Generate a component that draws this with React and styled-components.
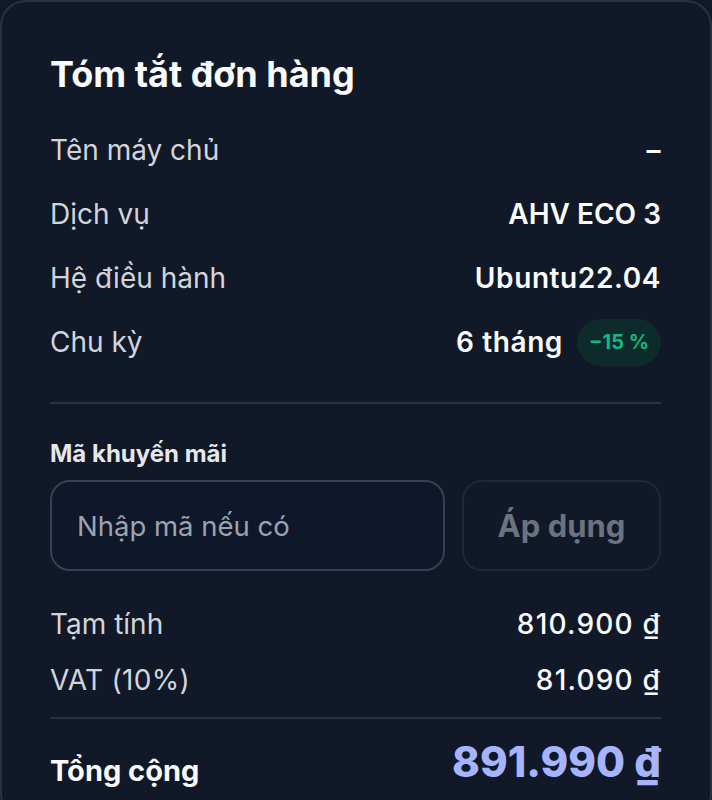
import React from "react";
import styled, { createGlobalStyle } from "styled-components";

const Global = createGlobalStyle`
  html, body { margin: 0; padding: 0; background: #111827; }
  body { font-family: "Inter", "Noto Sans", sans-serif; }
  * { box-sizing: border-box; }
`;

const Card = styled.section`
  width: 712px;
  min-height: 820px;
  background: #111827;
  border: 2px solid #2a3242;
  border-radius: 26px;
  padding: 48px 49px 0 48px;
  color: #f3f4f6;
  font-family: "Inter", sans-serif;
`;

const Title = styled.h2`
  margin: 0 0 20px 0;
  font-weight: 700;
  font-size: 36px;
  line-height: 48px;
  color: #f9fafb;
`;

const Rows = styled.div`
  display: flex;
  flex-direction: column;
`;

const Row = styled.div`
  display: flex;
  align-items: center;
  justify-content: space-between;
  height: ${(p) => p.$h || 64}px;
`;

const Label = styled.span`
  font-size: 28px;
  font-weight: 400;
  color: #d1d5db;
  letter-spacing: ${(p) => p.$ls || 0}px;
`;

const Value = styled.span`
  font-size: 28px;
  font-weight: 600;
  color: #f9fafb;
  letter-spacing: ${(p) => (p.$ls != null ? p.$ls : 0.6)}px;
  display: flex;
  align-items: center;
  gap: 14px;
`;

const Badge = styled.span`
  display: inline-flex;
  align-items: center;
  justify-content: center;
  height: 47px;
  width: 84px;
  border-radius: 999px;
  background: #0d2b2b;
  color: #10b981;
  font-size: 20px;
  font-weight: 700;
  letter-spacing: 0;
`;

const Divider = styled.hr`
  border: none;
  height: 2px;
  background: #2b3341;
  margin: ${(p) => p.$m || "28px 0 0 0"};
`;

const PromoLabel = styled.div`
  margin-top: 35px;
  font-size: 24px;
  font-weight: 700;
  color: #e5e7eb;
`;

const PromoRow = styled.div`
  display: flex;
  gap: 17px;
  margin-top: 12px;
`;

const Input = styled.input`
  width: 395px;
  min-width: 0;
  height: 91px;
  border-radius: 20px;
  border: 2px solid #364152;
  background: #0f172a;
  padding: 0 25px;
  font-family: "Inter", sans-serif;
  font-size: 27.5px;
  color: #e5e7eb;
  outline: none;
  &::placeholder { color: #9ca3af; }
`;

const Button = styled.button`
  width: 199px;
  height: 91px;
  border-radius: 20px;
  border: 2px solid #1f2837;
  background: #111827;
  font-family: "Inter", sans-serif;
  font-size: 31px;
  font-weight: 700;
  color: #6b7280;
`;

const Totals = styled.div`
  margin-top: 25px;
  display: flex;
  flex-direction: column;
`;

const SubValue = styled.span`
  font-size: 28px;
  font-weight: 500;
  letter-spacing: 1.2px;
  color: #f9fafb;
`;

const TotalRow = styled.div`
  display: flex;
  align-items: flex-end;
  justify-content: space-between;
  margin-top: 22px;
`;

const TotalLabel = styled.span`
  font-size: 29px;
  font-weight: 700;
  color: #f9fafb;
  margin-bottom: -5px;
`;

const TotalValue = styled.span`
  font-size: 42px;
  font-weight: 800;
  color: #a5b4fc;
  line-height: 1;
`;

const info = [
  ["Tên máy chủ", "–", 0.6],
  ["Dịch vụ", "AHV ECO 3", 0],
  ["Hệ điều hành", "Ubuntu22.04", 0.6],
];

export default function App() {
  return (
    <>
      <Global />
      <Card>
        <Title>Tóm tắt đơn hàng</Title>
        <Rows>
          {info.map(([l, v, ls]) => (
            <Row key={l}>
              <Label>{l}</Label>
              <Value $ls={ls}>{v}</Value>
            </Row>
          ))}
          <Row>
            <Label>Chu kỳ</Label>
            <Value>
              6 tháng <Badge>−15 %</Badge>
            </Value>
          </Row>
        </Rows>
        <Divider />
        <PromoLabel>Mã khuyến mãi</PromoLabel>
        <PromoRow>
          <Input placeholder="Nhập mã nếu có" />
          <Button>Áp dụng</Button>
        </PromoRow>
        <Totals>
          <Row $h={56}>
            <Label>Tạm tính</Label>
            <SubValue>810.900 ₫</SubValue>
          </Row>
          <Row $h={56}>
            <Label $ls={0.3}>VAT (10%)</Label>
            <SubValue>81.090 ₫</SubValue>
          </Row>
        </Totals>
        <Divider $m="9px 0 0 0" />
        <TotalRow>
          <TotalLabel>Tổng cộng</TotalLabel>
          <TotalValue>891.990 ₫</TotalValue>
        </TotalRow>
      </Card>
    </>
  );
}
